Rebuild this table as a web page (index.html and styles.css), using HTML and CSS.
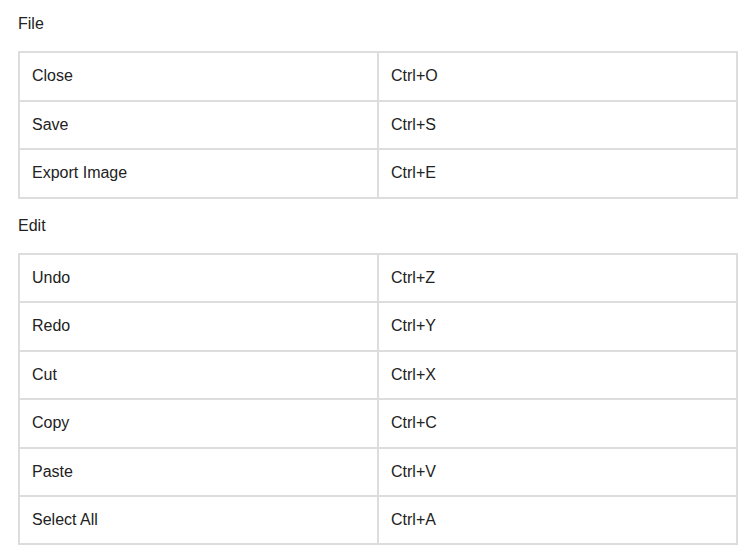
FILE: index.html
```html
<!DOCTYPE html>
<html>
<head>
<meta charset="utf-8">
<link rel="stylesheet" href="styles.css">
</head>
<body>
<div class="page">
  <div class="section-title">File</div>
  <table class="shortcuts">
    <tr><td>Close</td><td>Ctrl+O</td></tr>
    <tr><td>Save</td><td>Ctrl+S</td></tr>
    <tr><td>Export Image</td><td>Ctrl+E</td></tr>
  </table>
  <div class="section-title">Edit</div>
  <table class="shortcuts">
    <tr><td>Undo</td><td>Ctrl+Z</td></tr>
    <tr><td>Redo</td><td>Ctrl+Y</td></tr>
    <tr><td>Cut</td><td>Ctrl+X</td></tr>
    <tr><td>Copy</td><td>Ctrl+C</td></tr>
    <tr><td>Paste</td><td>Ctrl+V</td></tr>
    <tr><td>Select All</td><td>Ctrl+A</td></tr>
  </table>
</div>
</body>
</html>
```
FILE: styles.css
```css
html, body {
  margin: 0;
  padding: 0;
  background: #ffffff;
}
.page {
  padding: 15px 14px 0 18px;
  font-family: "Liberation Sans", Arial, sans-serif;
  font-size: 16px;
  color: #222222;
}
.section-title {
  line-height: 18.4px;
  margin-bottom: 18px;
}
.shortcuts {
  width: 720px;
  border-collapse: collapse;
  table-layout: fixed;
  margin-bottom: 18px;
}
.shortcuts td {
  width: 50%;
  border: 2px solid #dddddd;
  padding: 14px 12px 14px 12px;
  line-height: 18.4px;
}
```
